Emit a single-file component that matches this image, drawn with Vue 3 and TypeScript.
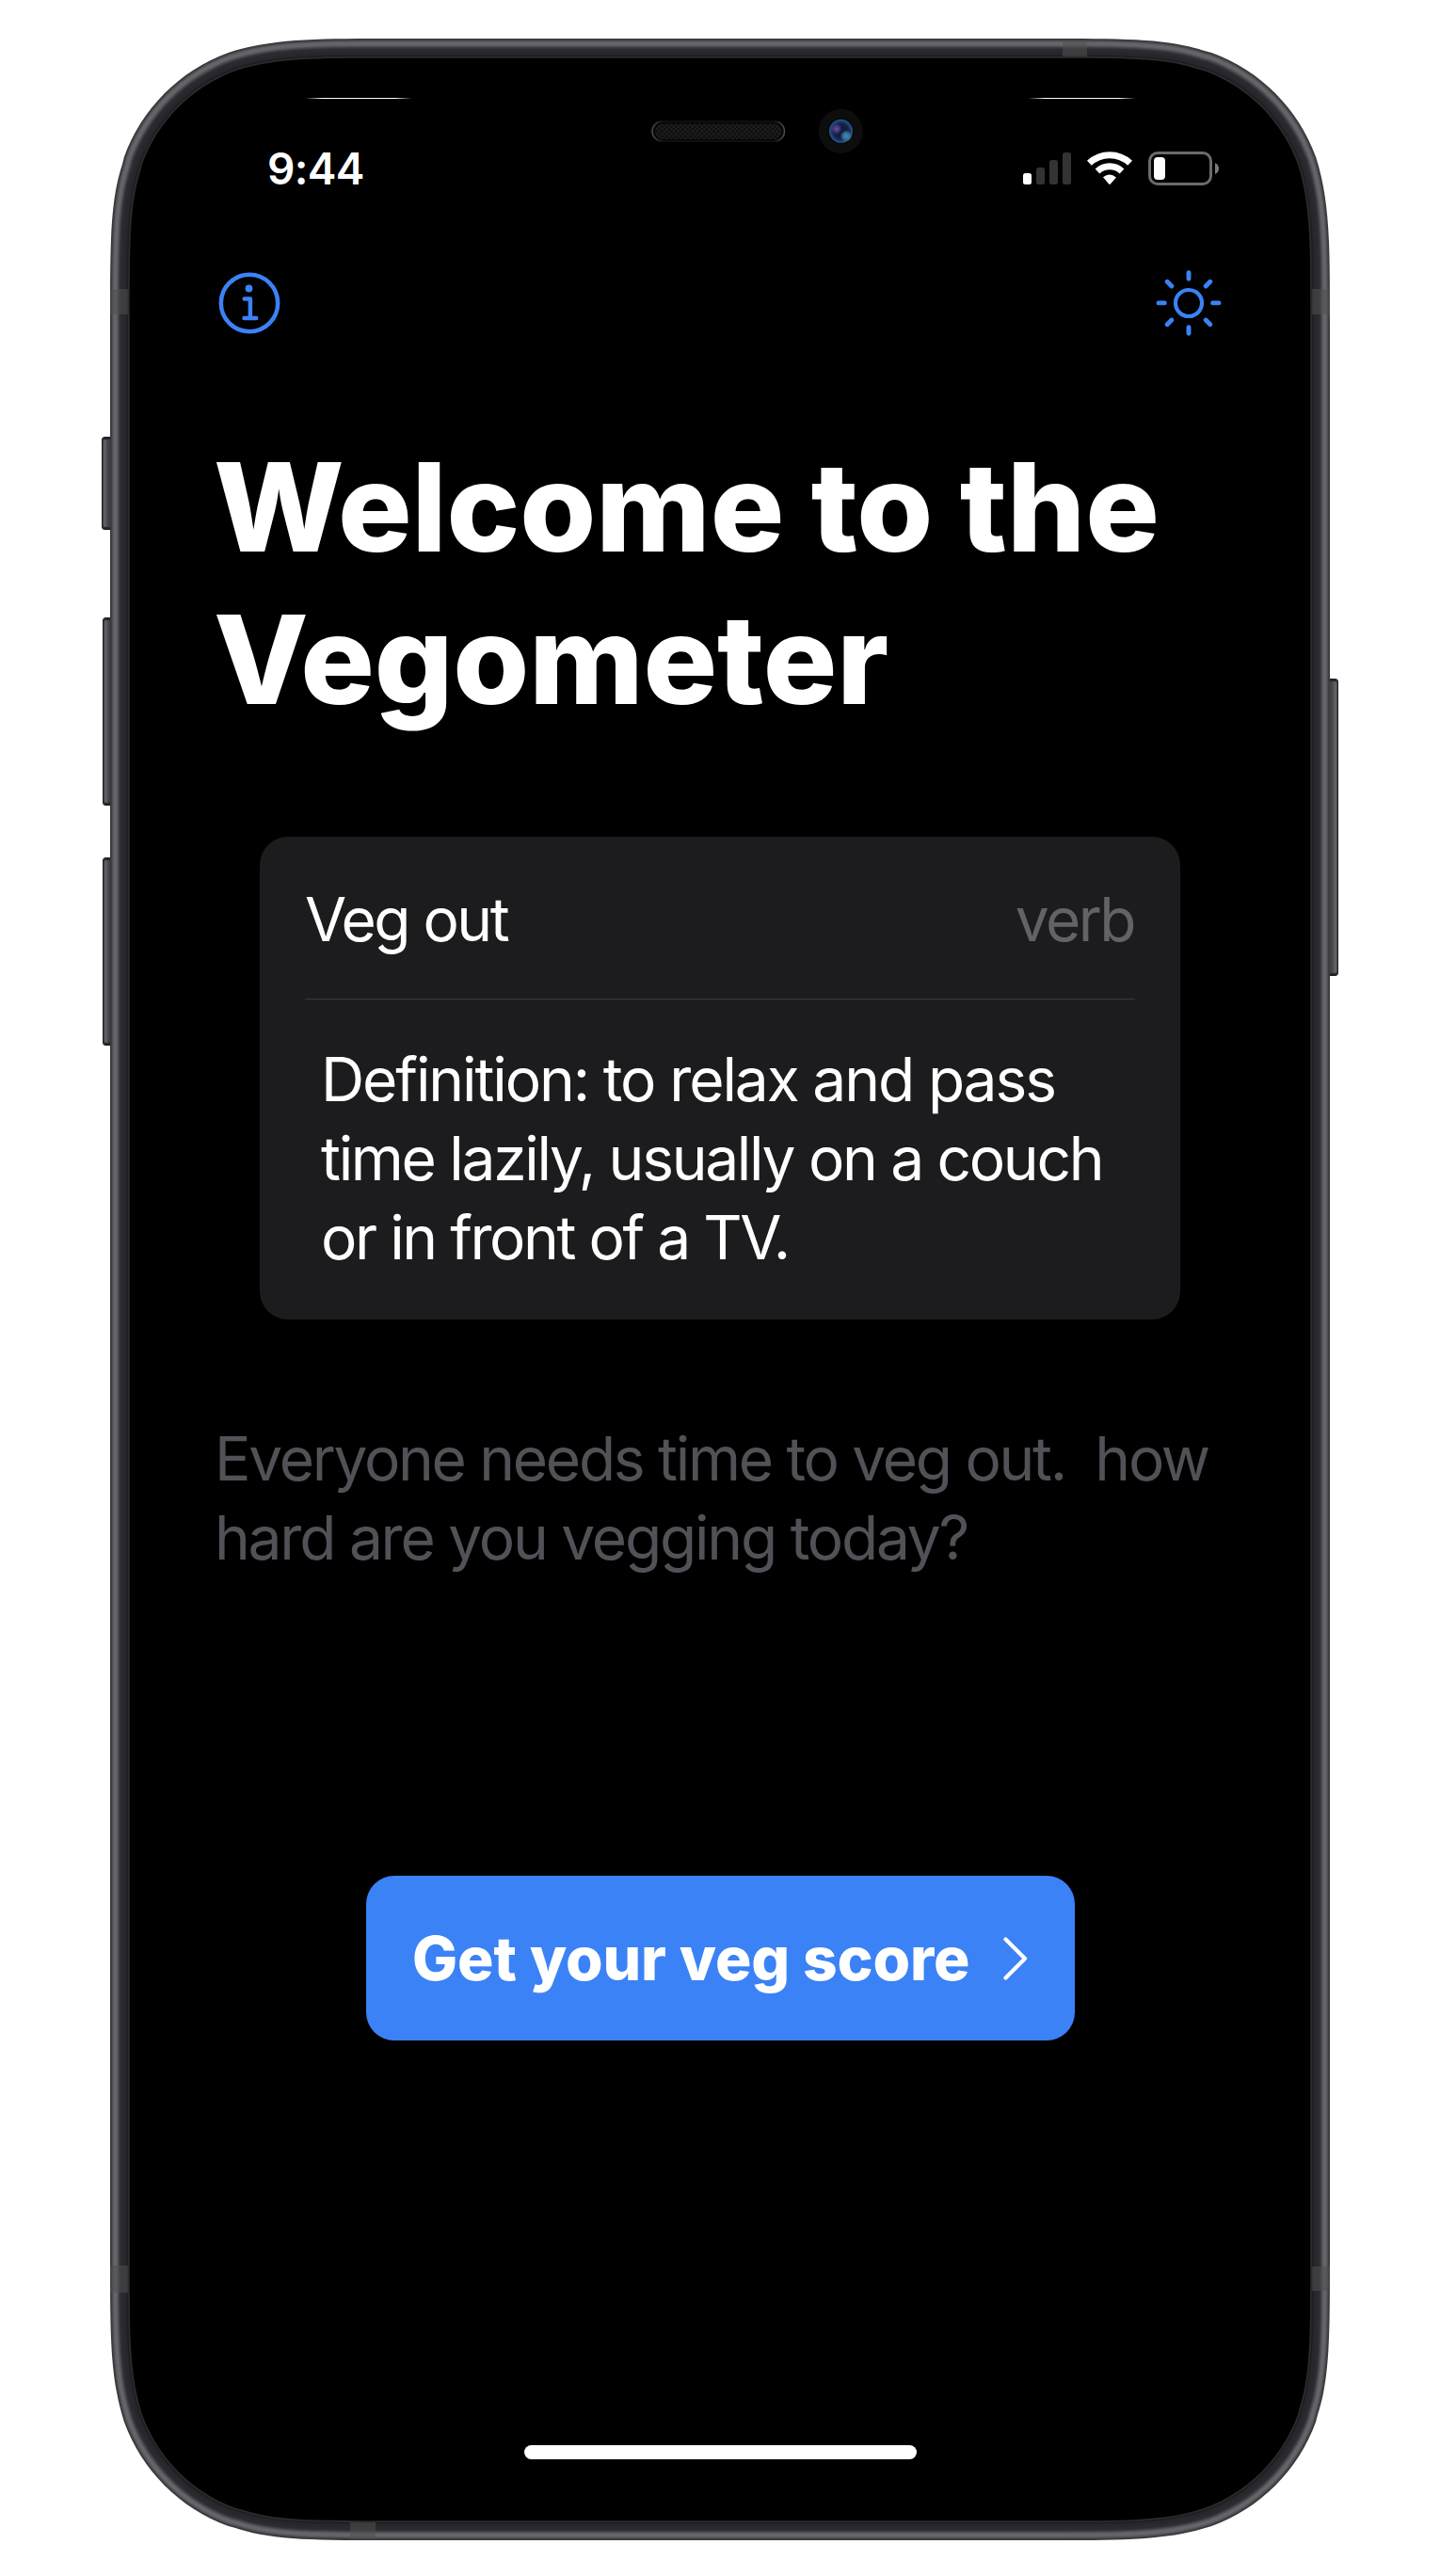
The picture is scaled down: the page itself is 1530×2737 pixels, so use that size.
<script setup lang="ts">
interface Line {
  text: string
  spacing: number
}
interface Ring {
  inset: number
  color: string
}

const titleLines: Line[] = [
  { text: 'Welcome to the', spacing: -0.15 },
  { text: 'Vegometer', spacing: -0.15 },
]
const definitionLines: Line[] = [
  { text: 'Definition: to relax and pass', spacing: -2.1 },
  { text: 'time lazily, usually on a couch', spacing: -2.3 },
  { text: 'or in front of a TV.', spacing: -2.43 },
]
const noteLines: Line[] = [
  { text: 'Everyone needs time to veg out.  how', spacing: -2.28 },
  { text: 'hard are you vegging today?', spacing: -2.22 },
]

const W = 1296
const H = 2658
const R = 199

// Continuous-curvature rounded rectangle, shrunk by `inset` on every side.
function squircle(inset: number): string {
  const r = R - inset
  const x0 = inset
  const y0 = inset
  const x1 = W - inset
  const y1 = H - inset
  const a = 1.528665 * r
  const b = 1.08849296 * r
  const c = 0.86840694 * r
  const d = 0.66993427 * r
  const e = 0.06549569 * r
  const f = 0.63149399 * r
  const g = 0.074911 * r
  const h = 0.37282392 * r
  const k = 0.16905899 * r
  return [
    `M${x0 + a} ${y0}H${x1 - a}`,
    `C${x1 - b} ${y0} ${x1 - c} ${y0} ${x1 - d} ${y0 + e}`,
    `L${x1 - f} ${y0 + g}C${x1 - h} ${y0 + k} ${x1 - k} ${y0 + h} ${x1 - g} ${y0 + f}`,
    `C${x1} ${y0 + c} ${x1} ${y0 + b} ${x1} ${y0 + a}`,
    `V${y1 - a}`,
    `C${x1} ${y1 - b} ${x1} ${y1 - c} ${x1 - e} ${y1 - d}`,
    `L${x1 - g} ${y1 - f}C${x1 - k} ${y1 - h} ${x1 - h} ${y1 - k} ${x1 - f} ${y1 - g}`,
    `C${x1 - c} ${y1} ${x1 - b} ${y1} ${x1 - a} ${y1}`,
    `H${x0 + a}`,
    `C${x0 + b} ${y1} ${x0 + c} ${y1} ${x0 + d} ${y1 - e}`,
    `L${x0 + f} ${y1 - g}C${x0 + h} ${y1 - k} ${x0 + k} ${y1 - h} ${x0 + g} ${y1 - f}`,
    `C${x0} ${y1 - c} ${x0} ${y1 - b} ${x0} ${y1 - a}`,
    `V${y0 + a}`,
    `C${x0} ${y0 + b} ${x0} ${y0 + c} ${x0 + e} ${y0 + d}`,
    `L${x0 + g} ${y0 + f}C${x0 + k} ${y0 + h} ${x0 + h} ${y0 + k} ${x0 + f} ${y0 + g}`,
    `C${x0 + c} ${y0} ${x0 + b} ${y0} ${x0 + a} ${y0}Z`,
  ].join('')
}

const rings: Ring[] = [
  { inset: 0, color: '#39383b' },
  { inset: 1, color: '#3f3e42' },
  { inset: 2, color: '#504f53' },
  { inset: 3, color: '#5d5c61' },
  { inset: 4, color: '#656469' },
  { inset: 5, color: '#67666b' },
  { inset: 6, color: '#646368' },
  { inset: 7, color: '#5c5b60' },
  { inset: 8, color: '#4d4c51' },
  { inset: 9, color: '#3f3e43' },
  { inset: 10, color: '#333238' },
  { inset: 11, color: '#2b2a30' },
  { inset: 14, color: '#28272d' },
  { inset: 17, color: '#232228' },
  { inset: 18, color: '#1d1d20' },
  { inset: 19, color: '#2b2b2a' },
  { inset: 20.8, color: '#000' },
]
</script>

<template>
  <main class="page">
    <div class="phone">
      <i class="key key-mute"></i>
      <i class="key key-up"></i>
      <i class="key key-down"></i>
      <i class="key key-power"></i>
      <svg class="frame" :viewBox="`0 0 ${W} ${H}`" aria-hidden="true">
        <defs>
          <radialGradient id="lens">
            <stop offset="0" stop-color="#0d1330" />
            <stop offset=".65" stop-color="#15224a" />
            <stop offset="1" stop-color="#28598a" />
          </radialGradient>
          <radialGradient id="violet">
            <stop offset="0" stop-color="#7650b0" />
            <stop offset="1" stop-color="#7650b0" stop-opacity="0" />
          </radialGradient>
          <radialGradient id="teal">
            <stop offset="0" stop-color="#3f8fb8" />
            <stop offset=".5" stop-color="#3a83ac" stop-opacity=".8" />
            <stop offset="1" stop-color="#3a83ac" stop-opacity="0" />
          </radialGradient>
          <linearGradient id="glint">
            <stop offset="0" stop-color="#fff" stop-opacity="0" />
            <stop offset=".16" stop-color="#fff" />
            <stop offset=".84" stop-color="#fff" />
            <stop offset="1" stop-color="#fff" stop-opacity="0" />
          </linearGradient>
          <linearGradient id="rim">
            <stop offset="0" stop-color="#4a4a4a" />
            <stop offset=".08" stop-color="#121212" />
            <stop offset=".92" stop-color="#121212" />
            <stop offset="1" stop-color="#4a4a4a" />
          </linearGradient>
          <pattern id="mesh" width="5" height="5" patternUnits="userSpaceOnUse">
            <rect width="5" height="5" fill="#0e0e0e" />
            <rect width="2.5" height="2.5" fill="#1d1d1d" />
            <rect x="2.5" y="2.5" width="2.5" height="2.5" fill="#1d1d1d" />
          </pattern>
        </defs>
        <path v-for="r in rings" :key="r.inset" :d="squircle(r.inset)" :fill="r.color" />
        <g fill="#4f4f4f" fill-opacity=".54">
          <rect x="0" y="266" width="19" height="27" />
          <rect x="1277" y="266" width="19" height="27" />
          <rect x="0" y="2366" width="19" height="29" />
          <rect x="1277" y="2367" width="19" height="26" />
          <rect x="1012" y="2" width="26" height="17" />
          <rect x="255" y="2639" width="27" height="18" />
        </g>
        <rect x="207" y="63" width="114" height="1" fill="url(#glint)" />
        <rect x="975" y="63" width="115" height="1" fill="url(#glint)" />
        <rect x="576" y="88" width="140.5" height="21" rx="10.5" fill="#050505" stroke="url(#rim)" stroke-width="1.6" />
        <rect x="579" y="90.5" width="134.5" height="16.5" rx="8" fill="url(#mesh)" />
        <circle cx="776.3" cy="98.3" r="23.5" fill="#0d0d0d" />
        <circle cx="776.3" cy="98.3" r="14" fill="#070707" />
        <circle cx="776.5" cy="98.3" r="12.5" fill="url(#lens)" />
        <circle cx="772" cy="96" r="6" fill="url(#violet)" />
        <circle cx="782" cy="103.5" r="6.5" fill="url(#teal)" />
      </svg>

      <section class="screen">
        <header class="status">
          <span class="time">9:44</span>
          <svg class="status-icons" viewBox="1087 160 209 38" aria-hidden="true">
            <rect x="1087" y="184" width="9" height="12" rx="2.5" fill="#fff" />
            <g fill="#333">
              <rect x="1101" y="178" width="9" height="18" rx="2.5" />
              <rect x="1115" y="170" width="9" height="26" rx="2.5" />
              <rect x="1129" y="162" width="9" height="34" rx="2.5" />
            </g>
            <g fill="none" stroke="#fff" stroke-width="7">
              <path d="M1157.4 173.3a31.5 31.5 0 0 1 43.2 0" />
              <path d="M1166 182a19 19 0 0 1 26 0" />
            </g>
            <path d="M1172 188.2q7-5.4 14 0.2l-6.2 7.2q-.8.8-1.6 0z" fill="#fff" />
            <rect x="1221.5" y="162.5" width="65" height="33" rx="8.5" fill="none" stroke="#6b6b6b" stroke-width="3" />
            <rect x="1226" y="167" width="12" height="24" rx="4" fill="#fff" />
            <path d="M1291 173.2c5.4 2 5.4 9.8 0 11.8z" fill="#7b7b7b" />
          </svg>
        </header>

        <nav class="toolbar">
          <svg class="info" viewBox="231.5 287.5 66 70" role="img" aria-label="Info">
            <g fill="none" stroke="#3b82f6" stroke-width="4.5" stroke-linecap="round" stroke-linejoin="round">
              <circle cx="264.5" cy="322.5" r="30.2" />
              <path d="M259.2 318.1h6.2v20.4M259 338.5h12.7" />
            </g>
            <circle cx="264" cy="307" r="3.9" fill="#3b82f6" />
          </svg>
          <svg class="sun" viewBox="-35 -35 70 70" role="img" aria-label="Appearance">
            <g fill="none" stroke="#3b82f6" stroke-linecap="round">
              <circle r="14" stroke-width="4.2" />
              <path
                stroke-width="4.9"
                d="M0-32.3V-25.7M0 32.3V25.7M-32-.1H-25.6M32-.1H25.6M-22.8-22.7-18.2-18.1M22.8-22.7 18.2-18.1M-22.8 22.7-18.2 18.1M22.8 22.7 18.2 18.1"
              />
            </g>
          </svg>
        </nav>

        <h1 class="title">
          <span v-for="l in titleLines" :key="l.text" class="line" :style="{ letterSpacing: l.spacing + 'px' }">{{ l.text }}</span>
        </h1>

        <article class="card">
          <div class="entry">
            <span class="term">Veg out</span>
            <span class="kind">verb</span>
          </div>
          <p class="definition">
            <span v-for="l in definitionLines" :key="l.text" class="line" :style="{ letterSpacing: l.spacing + 'px' }">{{ l.text }}</span>
          </p>
        </article>

        <p class="note">
          <span v-for="l in noteLines" :key="l.text" class="line" :style="{ letterSpacing: l.spacing + 'px' }">{{ l.text }}</span>
        </p>

        <button class="cta" type="button">
          <span class="cta-label">Get your veg score</span>
          <svg class="chevron" viewBox="0 0 26 46" aria-hidden="true">
            <path d="M2.5 2.5 23 23 2.5 43.5" fill="none" stroke="#fff" stroke-width="4.2" stroke-linecap="round" stroke-linejoin="round" />
          </svg>
        </button>

        <div class="home"></div>
      </section>
    </div>
  </main>
</template>

<style>
body {
  background: #fff;
}
</style>

<style scoped>
.page {
  box-sizing: border-box;
  width: 1530px;
  height: 2737px;
  padding: 41px 117px 38px;
  font-family: Inter, "Liberation Sans", sans-serif;
  overflow: hidden;
}
.phone {
  box-sizing: border-box;
  position: relative;
  width: 1296px;
  height: 2658px;
  padding: 21px;
}
.frame {
  position: absolute;
  inset: 0;
  width: 1296px;
  height: 2658px;
}
.key {
  position: absolute;
  box-sizing: border-box;
  left: -8px;
  width: 12px;
  height: 200px;
  border: 1px solid #1f1e26;
  border-radius: 3px;
  background: linear-gradient(90deg, #4a494e, #626166 25%, #3f3e43 60%, #4a494e);
  box-shadow: inset 0 2px 1px #25242a, inset 0 -2px 1px #25242a;
}
.key-mute {
  top: 423px;
  left: -9px;
  height: 99px;
}
.key-up {
  top: 615px;
}
.key-down {
  top: 870px;
}
.key-power {
  top: 680px;
  left: auto;
  right: -9px;
  height: 316px;
  background: linear-gradient(270deg, #58575c, #626166 25%, #434247 60%, #4a494e);
}
.screen {
  position: relative;
  display: flex;
  flex-direction: column;
  height: 2616px;
  color: #fff;
}
.status {
  display: flex;
  align-items: center;
  justify-content: space-between;
  height: 60px;
  margin: 87px 96px 0 146px;
}
.time {
  font-size: 46px;
  font-weight: 600;
  letter-spacing: -0.7px;
}
.status-icons {
  width: 209px;
  height: 38px;
}
.toolbar {
  display: flex;
  align-items: center;
  justify-content: space-between;
  height: 70px;
  margin: 78px 94px 0;
}
.info {
  width: 66px;
  height: 70px;
}
.sun {
  width: 70px;
  height: 70px;
}
.line {
  display: block;
  white-space: pre;
}
.title {
  margin: 101px 0 0 89px;
  font-size: 131px;
  font-weight: 800;
  line-height: 162px;
}
.card {
  box-sizing: border-box;
  width: 978px;
  height: 513px;
  margin: 107px 0 0 138px;
  padding: 0 48px;
  border-radius: 30px;
  background: #1c1c1e;
  font-size: 64px;
  font-weight: 400;
}
.entry {
  box-sizing: border-box;
  display: flex;
  align-items: center;
  justify-content: space-between;
  height: 173px;
  padding-top: 3px;
  border-bottom: 1px solid #3a3a3c;
}
.term {
  letter-spacing: -2.5px;
}
.kind {
  margin-right: 1px;
  color: #636366;
  letter-spacing: -2.5px;
}
.definition {
  margin: 43px 0 0 17px;
  line-height: 84px;
}
.note {
  margin: 106px 0 0 90px;
  color: #525157;
  font-size: 64px;
  font-weight: 400;
  line-height: 84px;
}
.cta {
  display: flex;
  align-items: center;
  justify-content: space-between;
  box-sizing: border-box;
  width: 753px;
  height: 175px;
  margin: 317px 0 0 251px;
  padding: 0 50px 0 49px;
  border: 0;
  border-radius: 30px;
  background: #3b82f6;
  color: #fff;
  font: 800 64px/84px Inter, "Liberation Sans", sans-serif;
}
.cta-label {
  white-space: nowrap;
  letter-spacing: -0.1px;
}
.chevron {
  width: 26px;
  height: 46px;
}
.home {
  width: 417px;
  height: 15px;
  margin: 430px 0 0 419px;
  border-radius: 8px;
  background: #fff;
}
</style>
